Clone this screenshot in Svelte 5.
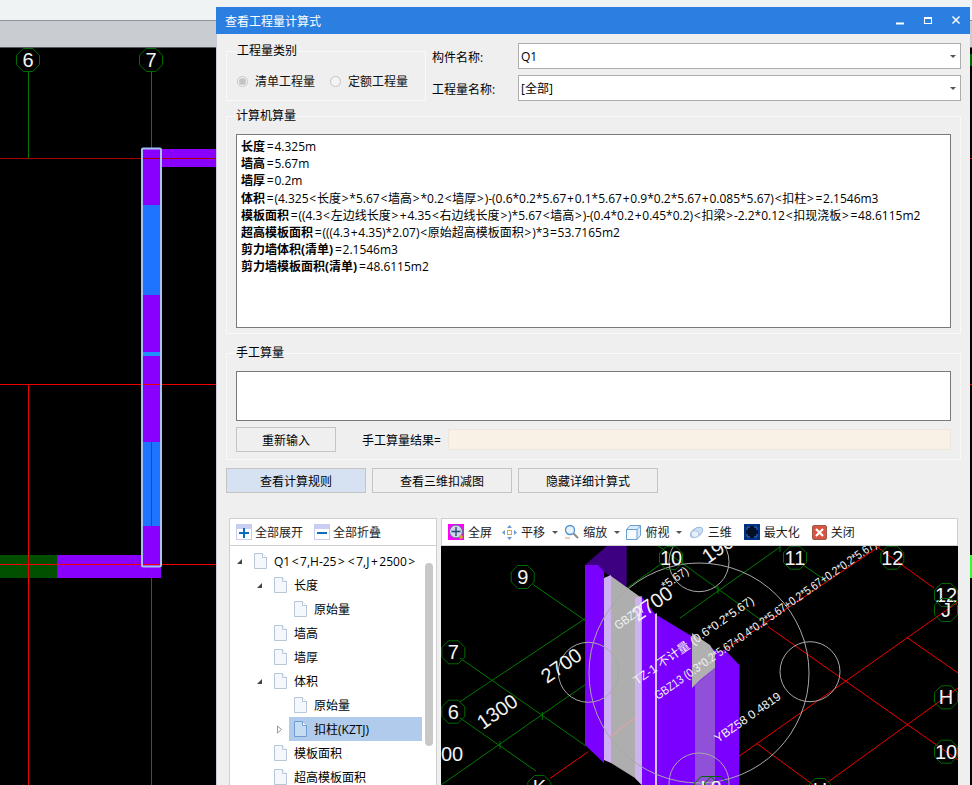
<script>
  // CAD drawing data, all in window pixels
  const planLabels = [
    { x: 28, y: 60, t: '6' },
    { x: 151, y: 60, t: '7' },
  ];

  const axisLabels = [
    { x: 522.7, y: 577, t: '9' },
    { x: 453.3, y: 652.3, t: '7' },
    { x: 453.3, y: 711.7, t: '6' },
    { x: 671, y: 558, t: '10' },
    { x: 795, y: 557.7, t: '11' },
    { x: 892.3, y: 557.7, t: '12' },
    { x: 946, y: 595, t: '12' },
    { x: 946, y: 610, t: 'J' },
    { x: 946, y: 697.3, t: 'H' },
    { x: 946, y: 751.7, t: '10' },
    { x: 539.3, y: 787, t: 'K' },
    { x: 820, y: 790, t: 'H' },
    { x: 706, y: 788, t: 'L' },
    { x: 716, y: 788, t: '8' },
  ];

  const greenLines = [
    [532.7, 584.3, 586, 621],
    [460, 658, 586, 746],
    [460, 718, 536, 771],
    [441, 785, 586, 684],
    [460, 701.7, 586, 618],
    [627, 588, 661, 564],
    [680, 618, 780, 547],
    [657, 545, 768, 625],
    [803, 565, 828, 582],
  ];

  const redLines = [
    [739.3, 756, 958, 602],
    [828, 782, 958, 688],
    [768, 626.7, 958, 760],
    [756.7, 743.3, 813.3, 785],
    [906.7, 637.3, 958, 673],
    [876.7, 546.7, 934, 588],
    [715, 656.7, 880, 546],
    [588.3, 751.7, 550, 778.3],
  ];

  const greyCircles = [
    { x: 588.3, y: 672.3, r: 30 },
    { x: 699, y: 673, r: 110 },
    { x: 810, y: 671.7, r: 30 },
    { x: 699, y: 561.7, r: 30 },
    { x: 699, y: 783, r: 30 },
  ];

  const rotatedTexts = [
    { x: 708, y: 564, t: '1900', size: 20 },
    { x: 638, y: 622, t: '2700', size: 20 },
    { x: 547, y: 684, t: '2700', size: 20 },
    { x: 483, y: 730, t: '1300', size: 20 },
    { x: 618, y: 630, t: 'GBZ17', size: 12, len: 34 },
    { x: 665, y: 590, t: '*5.67)', size: 12, len: 30 },
    { x: 637, y: 685, t: 'TZ-1 不计量 (0.6*0.2*5.67)', size: 12, len: 144 },
    { x: 658, y: 700, t: 'GBZ13 (0.3*0.2*5.67+0.4*0.2*5.67+0.2*5.67+0.2*0.2*5.67)', size: 12, len: 268 },
    { x: 718, y: 743, t: 'YBZ58 0.4819', size: 12, len: 78 },
  ];

  function octagon(cx, cy, r) {
    const pts = [];
    for (let i = 0; i < 8; i++) {
      const a = Math.PI / 8 + (i * Math.PI) / 4;
      pts.push(`${(cx + r * Math.cos(a)).toFixed(1)},${(cy + r * Math.sin(a)).toFixed(1)}`);
    }
    return pts.join(' ');
  }

  // operators sit wider in the original font, so they get their own span
  function tokens(s) {
    return s.split(/([<>=+])/).filter(Boolean);
  }
  const isOp = (t) => /^[<>=+]$/.test(t);

  const calcLines = [
    ['长度', '=4.325m'],
    ['墙高', '=5.67m'],
    ['墙厚', '=0.2m'],
    ['体积', '=(4.325<长度>*5.67<墙高>*0.2<墙厚>)-(0.6*0.2*5.67+0.1*5.67+0.9*0.2*5.67+0.085*5.67)<扣柱>=2.1546m3'],
    ['模板面积', '=((4.3<左边线长度>+4.35<右边线长度>)*5.67<墙高>)-(0.4*0.2+0.45*0.2)<扣梁>-2.2*0.12<扣现浇板>=48.6115m2'],
    ['超高模板面积', '=(((4.3+4.35)*2.07)<原始超高模板面积>)*3=53.7165m2'],
    ['剪力墙体积(清单)', '=2.1546m3'],
    ['剪力墙模板面积(清单)', '=48.6115m2'],
  ];

  const treeRows = [
    { level: 0, arrow: 'open', label: 'Q1<7,H-25><7,J+2500>' },
    { level: 1, arrow: 'open', label: '长度' },
    { level: 2, label: '原始量' },
    { level: 1, label: '墙高' },
    { level: 1, label: '墙厚' },
    { level: 1, arrow: 'open', label: '体积' },
    { level: 2, label: '原始量' },
    { level: 2, arrow: 'closed', label: '扣柱(KZTJ)', selected: true },
    { level: 1, label: '模板面积' },
    { level: 1, label: '超高模板面积' },
  ];
</script>

<div class="screen">
  <div class="menu-strip"></div>
  <div class="tool-strip"></div>

  <svg class="plan" viewBox="0 48 972 737">
    <line class="g-line" x1="28.5" y1="72" x2="28.5" y2="158" />
    <line class="g-line" x1="151.5" y1="72" x2="151.5" y2="158" />
    {#each planLabels as p}
      <polygon class="axis" points={octagon(p.x, p.y, 12.5)} />
      <text class="axis-text" x={p.x} y={p.y + 7} font-size="20">{p.t}</text>
    {/each}
    <rect x="161" y="149" width="55" height="18" fill="#8a00ff" />
    <rect x="0" y="555" width="57" height="23" fill="#005000" />
    <rect x="57" y="555" width="104" height="23" fill="#8a00ff" />
    <rect x="143" y="149" width="17" height="417" fill="#8a00ff" />
    <rect x="143" y="205" width="17" height="90" fill="#1e73ff" />
    <rect x="143" y="352" width="17" height="4" fill="#1e90ff" />
    <rect x="143" y="442" width="17" height="84" fill="#1e73ff" />
    <line x1="0" y1="158.5" x2="216" y2="158.5" stroke="#a80000" />
    <line class="r-line" x1="0" y1="384.5" x2="216" y2="384.5" />
    <line class="r-line" x1="0" y1="564.5" x2="216" y2="564.5" />
    <line class="r-line" x1="28.5" y1="384" x2="28.5" y2="785" />
    <line class="r-line" x1="151.5" y1="384" x2="151.5" y2="785" />
    <rect x="142" y="148.5" width="19" height="418" rx="1" fill="none" stroke="#a4c2f4" stroke-width="2" />
    <rect x="970" y="555" width="2" height="23" fill="#2dff2d" />
    <rect x="970" y="54" width="2" height="12" fill="#006400" />
    <line class="r-line" x1="970" y1="158.5" x2="972" y2="158.5" />
    <line class="r-line" x1="970" y1="384.5" x2="972" y2="384.5" />
  </svg>

  <section class="dialog">
    <header class="titlebar">
      <span>查看工程量计算式</span>
      <svg class="win-btns" width="70" height="12" viewBox="0 0 70 12">
        <rect x="0" y="7.500" width="8" height="2" fill="#fff" />
        <rect x="28.5" y="2.5" width="7" height="6" fill="none" stroke="#fff" />
        <rect x="28" y="2" width="8" height="2" fill="#fff" />
        <path d="M56.5 1.5l7 7M63.5 1.5l-7 7" stroke="#fff" stroke-width="1.5" fill="none" />
      </svg>
    </header>

    <div class="body">
      <div class="top-row">
        <fieldset class="group kind">
          <legend>工程量类别</legend>
          <div class="radios">
            <span class="radio"><i class="dot on"></i>清单工程量</span>
            <span class="radio"><i class="dot"></i>定额工程量</span>
          </div>
        </fieldset>
        <div class="names">
          <div class="name-row">
            <span class="name-label">构件名称:</span>
            <div class="combo">Q1<i class="caret"></i></div>
          </div>
          <div class="name-row">
            <span class="name-label">工程量名称:</span>
            <div class="combo">[全部]<i class="caret"></i></div>
          </div>
        </div>
      </div>

      <fieldset class="group calc">
        <legend>计算机算量</legend>
        <div class="calc-box">
          {#each calcLines as l}
            <div class="calc-line"><b>{l[0]}</b>{#each tokens(l[1]) as t}{#if isOp(t)}<span class="op">{t}</span>{:else}{t}{/if}{/each}</div>
          {/each}
        </div>
      </fieldset>

      <fieldset class="group manual">
        <legend>手工算量</legend>
        <div class="manual-box"></div>
        <div class="manual-foot">
          <button class="btn reinput">重新输入</button>
          <span class="result-label">手工算量结果=</span>
          <div class="result"></div>
        </div>
      </fieldset>

      <div class="actions">
        <button class="btn action active">查看计算规则</button>
        <button class="btn action">查看三维扣减图</button>
        <button class="btn action">隐藏详细计算式</button>
      </div>

      <div class="lower">
        <div class="tree-pane">
          <div class="toolbar">
            <span class="tool tree-tool">
              <svg width="16" height="16" viewBox="0 0 16 16"><rect width="16" height="16" fill="#c9cdf2" /><rect x="1" y="5" width="14" height="10" fill="#fff" /><path d="M8 4v10M3 9h10" stroke="#0f6cbd" stroke-width="2" /></svg>
              全部展开
            </span>
            <span class="tool tree-tool">
              <svg width="16" height="16" viewBox="0 0 16 16"><rect width="16" height="16" fill="#c9cdf2" /><rect x="1" y="5" width="14" height="10" fill="#fff" /><path d="M3 9h10" stroke="#0f6cbd" stroke-width="2" /></svg>
              全部折叠
            </span>
          </div>
          <div class="tree">
            {#each treeRows as row}
              <div class="tree-row" style="padding-left: {6 + row.level * 20}px">
                <span class="twist">
                  {#if row.arrow === 'open'}
                    <svg width="7" height="7" viewBox="0 0 7 7"><path d="M6 1v5H1z" fill="#444" /></svg>
                  {:else if row.arrow === 'closed'}
                    <svg width="7" height="9" viewBox="0 0 7 9"><path d="M1.5 1l4 3.500-4 3.500z" fill="#fff" stroke="#999" /></svg>
                  {/if}
                </span>
                <span class="node" class:selected={row.selected}>
                  <svg width="13" height="16" viewBox="0 0 13 16">
                    <path d="M.5.5h8l4 4v11H.5z" fill={row.selected ? '#c6dcf2' : '#f4f7fb'} stroke={row.selected ? '#6f9fd0' : '#b9c6d6'} />
                    <path d="M8.500.5v4h4" fill="#fff" stroke={row.selected ? '#6f9fd0' : '#b9c6d6'} />
                  </svg>
                  <span class="node-label">{#each tokens(row.label) as t}{#if isOp(t)}<span class="op wide">{t}</span>{:else}{t}{/if}{/each}</span>
                </span>
              </div>
            {/each}
            <div class="scroll-thumb"></div>
          </div>
        </div>

        <div class="view-pane">
          <div class="toolbar view-bar">
            <span class="tool">
              <svg width="16" height="16" viewBox="0 0 16 16"><rect width="16" height="16" fill="#f0f" /><circle cx="8" cy="7.500" r="6.500" fill="#cfd6e6" stroke="#5a6a8c" /><path d="M8 3v9M3.500 7.500h9" stroke="#27457a" stroke-width="1.400" /><circle cx="13" cy="13" r="2" fill="#c9a23c" /></svg>
              全屏
            </span>
            <span class="tool has-caret">
              <svg width="15" height="15" viewBox="0 0 15 15"><g fill="#6a9bd8"><path d="M7.500 0l2.500 3H5zM7.500 15l2.500-3H5zM0 7.500l3-2.500v5zM15 7.500l-3-2.500v5z" /></g><rect x="5.500" y="5.500" width="4" height="4" fill="#fff" stroke="#e2a15a" /></svg>
              平移<i class="caret"></i>
            </span>
            <span class="tool has-caret">
              <svg width="15" height="16" viewBox="0 0 15 16"><circle cx="6" cy="6" r="4.500" fill="#eaf3fb" stroke="#4d8fd0" stroke-width="1.300" /><path d="M9.500 9.500l4.500 4.500" stroke="#888" stroke-width="2" /><path d="M1 14h5" stroke="#e2a15a" /></svg>
              缩放<i class="caret"></i>
            </span>
            <span class="tool has-caret">
              <svg width="15" height="15" viewBox="0 0 15 15"><path d="M4 .5h10.500v10L11 14.500H.5v-10z" fill="#dcebf8" stroke="#6a9fd2" /><rect x="1" y="5" width="10" height="9" fill="#f6fbff" /><path d="M.5 4.500H11v10M11 4.500L14.500.5" fill="none" stroke="#6a9fd2" /></svg>
              俯视<i class="caret"></i>
            </span>
            <span class="tool">
              <svg width="15" height="15" viewBox="0 0 15 15"><ellipse cx="7.500" cy="7.500" rx="7" ry="4" transform="rotate(-35 7.500 7.500)" fill="#cfe0f4" stroke="#9bbbe0" /><ellipse cx="6" cy="9" rx="4" ry="3.500" fill="#e6eff9" stroke="#a9c4e4" /></svg>
              三维
            </span>
            <span class="tool spaced">
              <svg width="16" height="16" viewBox="0 0 16 16"><rect width="16" height="16" fill="#00308a" /><rect x="2" y="2" width="12" height="12" fill="#03102a" /><path d="M3 6V3h3M10 3h3v3M13 10v3h-3M6 13H3v-3" fill="none" stroke="#2d7ff0" /></svg>
              最大化
            </span>
            <span class="tool spaced">
              <svg width="15" height="15" viewBox="0 0 15 15"><rect x=".5" y=".5" width="14" height="14" rx="1.500" fill="#d9553f" stroke="#9c5a4c" /><path d="M4 4l7 7M11 4l-7 7" stroke="#fff" stroke-width="2.200" /></svg>
              关闭
            </span>
          </div>

          <svg class="scene" viewBox="441 546 517 239">
            {#each greenLines as l}
              <line class="g-line" x1={l[0]} y1={l[1]} x2={l[2]} y2={l[3]} />
            {/each}
            {#each redLines as l}
              <line class="r-line" x1={l[0]} y1={l[1]} x2={l[2]} y2={l[3]} />
            {/each}
            <path d="M500 741v8M542.300 712v8M718 586v8M780 546v6" class="g-line" />

            <!-- wall solids -->
            <polygon points="585,565 606.700,546 626.700,546 626.700,588 604,572" fill="#3c0080" />
            <polygon points="585,565 598,565 604,572 604,763 585,745" fill="#7a00ff" />
            <polygon points="604,578 611,575 611,763 604,760" fill="#cfb0f2" />
            <polygon points="611,576 641.700,598 641.700,785 635,778 611,763" fill="#aeaeae" />
            <polygon points="635,598 641.700,596 642,785 635,778" fill="#cdb4ee" />
            <polygon points="642,597 655,614 739.300,665 739.300,785 642,785" fill="#7a00ff" />
            <polygon points="655,614 657,613 657,785 655,785" fill="#d8c4f4" />
            <polygon points="692,633 710,645 715,653 715,668 700,680 695,685 692,688" fill="#b0b0b0" />
            <polygon points="695,685 715,668 715,785 695,785" fill="#9050d8" />
            <polygon points="715,653 725,650 739.300,665 739.300,680 715,668" fill="#7a00ff" />
            <line x1="635" y1="718" x2="610" y2="737" stroke="#f0a0a0" />

            {#each greyCircles as c}
              <circle cx={c.x} cy={c.y} r={c.r} fill="none" stroke="#a8a8a8" />
            {/each}

            {#each axisLabels as a}
              <polygon class="axis" points={octagon(a.x, a.y, 12.500)} />
              <text class="axis-text" x={a.x} y={a.y + 7} font-size="20">{a.t}</text>
            {/each}

            {#each rotatedTexts as r}
              <text
                class="dim-text"
                x={r.x}
                y={r.y}
                font-size={r.size}
                textLength={r.len}
                lengthAdjust={r.len ? 'spacingAndGlyphs' : undefined}
                transform="rotate(-35 {r.x} {r.y})">{r.t}</text>
            {/each}
            <text class="dim-text" x="441" y="761" font-size="20">00</text>
          </svg>
        </div>
      </div>
    </div>
  </section>
</div>

<style>
  :global(body) { margin: 0; background: #000; }

  .screen {
    position: relative;
    width: 972px; height: 785px;
    overflow: hidden;
    display: flex; flex-direction: column;
    background: #000;
    font-family: "Open Sans", "Noto Sans CJK SC", sans-serif;
    font-size: 12px;
    color: #000;
  }
  .menu-strip { height: 20px; background: #f0f3f4; border-bottom: 1px solid #8f9297; flex: none; }
  .tool-strip { height: 26px; background: #c9ccd1; border-bottom: 1px solid #55585c; flex: none; }
  .plan { display: block; flex: 1; width: 972px; height: 737px; }

  .g-line { stroke: #007a00; stroke-width: 1; fill: none; }
  .r-line { stroke: #f00000; stroke-width: 1; }
  .axis { fill: none; stroke: #006a00; stroke-width: 1; }
  .axis-text {
    fill: #f4f4f4;
    text-anchor: middle;
    font-family: "Liberation Sans", sans-serif;
  }
  .dim-text { fill: #f2f2f2; font-family: "Liberation Sans", "Noto Sans CJK SC", sans-serif; }

  /* floating window over the drawing */
  .dialog {
    position: absolute;
    left: 216px; top: 7px;
    width: 754px; height: 778px;
    box-sizing: border-box;
    background: #efefef;
    border-left: 1px solid #c5cbdc;
    display: flex; flex-direction: column;
  }
  .titlebar {
    height: 27px; flex: none;
    margin-left: -1px;
    background: #2b7fe1;
    color: #fff;
    display: flex; align-items: center; justify-content: space-between;
    padding: 0 4px 0 9px;
  }
  .win-btns { display: block; }

  .body { padding: 10px 9px 0; display: flex; flex-direction: column; }

  .group {
    margin: 0; min-width: 0;
    border: 1px solid #f9f9f9;
    padding: 0 9px;
  }
  legend { padding: 0; line-height: 14px; height: 14px; }

  .top-row { display: flex; gap: 6px; height: 58px; margin-top: -1px; }
  .kind { width: 200px; box-sizing: border-box; height: 57px; padding: 0 0 0 10px; margin-top: 1px; }
  .radios { display: flex; gap: 15px; margin-top: 14px; }
  .radio { display: flex; align-items: center; gap: 7px; color: #111; }
  .dot {
    width: 11px; height: 11px; box-sizing: border-box;
    border: 1px solid #c4c4c4; border-radius: 50%;
    background: #f4f4f4;
    display: flex; align-items: center; justify-content: center;
  }
  .dot.on::after { content: ""; width: 7px; height: 7px; border-radius: 50%; background: #c4c4c4; }

  .names { flex: 1; display: flex; flex-direction: column; gap: 6px; }
  .name-row { display: flex; align-items: center; }
  .name-label { width: 86px; flex: none; margin-top: 2px; }
  .combo {
    flex: 1; position: relative;
    height: 26px; box-sizing: border-box;
    background: #fff;
    border: 1px solid #adadad;
    padding: 1px 2px 0;
    line-height: 24px;
  }
  .caret {
    display: inline-block;
    width: 0; height: 0;
    border-left: 3px solid transparent; border-right: 3px solid transparent;
    border-top: 3px solid #555;
  }
  .combo .caret { position: absolute; right: 4px; top: 11px; }

  .calc { margin-top: 8px; height: 225px; box-sizing: border-box; }
  .calc-box {
    height: 194px; box-sizing: border-box;
    margin-top: 11px;
    background: #fff;
    border: 1px solid #7a7a7a;
    padding: 3px 4px;
  }
  .calc-line { line-height: 17.2px; white-space: nowrap; }
  .calc-line b { font-weight: 700; padding-right: 1px; }
  .op { padding: 0 .75px; }
  .op.wide { padding: 0 1.5px; }

  .manual { margin-top: 12px; height: 114px; box-sizing: border-box; }
  .manual-box {
    height: 50px; box-sizing: border-box;
    margin-top: 11px;
    background: #fff;
    border: 1px solid #7a7a7a;
  }
  .manual-foot { display: flex; align-items: center; margin-top: 6px; }
  .btn {
    font: inherit; color: #000;
    background: #efefef;
    border: 1px solid #c4c4c4;
    padding: 0;
  }
  .reinput { width: 100px; height: 25px; }
  .result-label { margin-left: 26px; width: 86px; flex: none; }
  .result {
    flex: 1;
    height: 21px; box-sizing: border-box;
    background: #f9f0e6;
    border: 1px solid #ece6de;
  }

  .actions { display: flex; gap: 6px; margin-top: 8px; }
  .action { width: 140px; height: 25px; }
  .action.active { background: #d6e2f2; }

  .lower { display: flex; gap: 4px; margin-top: 25px; padding-left: 3px; height: 270px; }
  .toolbar {
    height: 28px; box-sizing: border-box;
    background: #fff;
    border: 1px solid #cfcfcf;
    display: flex; align-items: center;
    padding-left: 6px;
    color: #222;
    flex: none;
  }
  .tool { display: flex; align-items: center; gap: 4px; }
  .tree-tool { margin-right: 11px; gap: 3px; }

  .tree-pane { width: 208px; flex: none; display: flex; flex-direction: column; }
  .tree {
    position: relative;
    flex: 1; min-height: 0;
    background: #fff;
    border: 1px solid #cfcfcf; border-top: none;
    padding-top: 3px;
    overflow: hidden;
  }
  .tree-row { display: flex; align-items: center; height: 24px; margin-right: 14px; white-space: nowrap; }
  .twist { width: 13px; flex: none; display: flex; align-items: center; }
  .node { flex: 1; height: 24px; display: flex; align-items: center; gap: 7px; padding-left: 5px; }
  .node.selected { background: #b0cbeb; }
  .scroll-thumb {
    position: absolute; left: 195px; top: 17px;
    width: 8px; height: 183px;
    border-radius: 4px;
    background: #c8c8c8;
  }

  .view-pane { width: 517px; flex: none; display: flex; flex-direction: column; }
  .view-bar { gap: 10px; }
  .has-caret { margin-right: -3.8px; }
  .has-caret .caret { margin-left: 3px; }
  .spaced { margin-left: 2px; }
  .scene { display: block; width: 517px; height: 239px; flex: none; background: #000; }
</style>
